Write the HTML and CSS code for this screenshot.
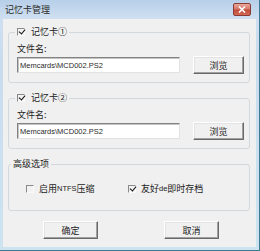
FILE: index.html
```html
<!DOCTYPE html>
<html lang="zh-CN">
<head>
<meta charset="utf-8">
<title>记忆卡管理</title>
<link rel="stylesheet" href="styles.css">
</head>
<body>
<div class="window">
  <div class="titlebar">
    <span class="title">记忆卡管理</span>
    <span class="close"><svg width="8" height="7" viewBox="0 0 8 7"><path d="M1 0.5 L7 6.5 M7 0.5 L1 6.5" stroke="#fff" stroke-width="1.6"/></svg></span>
  </div>
  <div class="content">
    <fieldset class="group">
      <legend class="legend-check"><span class="check on"></span>记忆卡①</legend>
      <div class="label">文件名:</div>
      <div class="filerow">
        <input class="path" type="text" value="Memcards\MCD002.PS2" readonly>
        <span class="btn browse">浏览</span>
      </div>
    </fieldset>
    <fieldset class="group">
      <legend class="legend-check"><span class="check on"></span>记忆卡②</legend>
      <div class="label">文件名:</div>
      <div class="filerow">
        <input class="path" type="text" value="Memcards\MCD002.PS2" readonly>
        <span class="btn browse">浏览</span>
      </div>
    </fieldset>
    <fieldset class="group adv">
      <legend class="legend-text">高级选项</legend>
      <div class="options">
        <label class="opt first"><span class="check"></span>启用<span class="lat">NTFS</span>压缩</label>
        <label class="opt"><span class="check on"></span>友好<span class="lat">de</span>即时存档</label>
      </div>
    </fieldset>
    <div class="actions">
      <span class="btn action">确定</span>
      <span class="btn action">取消</span>
    </div>
  </div>
</div>
</body>
</html>
```
FILE: styles.css
```css
html, body {
  margin: 0;
  padding: 0;
  background: #fff;
}
.window {
  width: 260px;
  height: 251px;
  box-sizing: border-box;
  display: flex;
  flex-direction: column;
  padding: 0 3px 3px 3px;
  border-right: 1px solid #3f7b8e;
  border-bottom: 1px solid #3f7b8e;
  background: linear-gradient(to bottom, #b7cfe9 0px, #cfdff1 18px, #c9dcef 60px, #cde3f0 100%);
  font-family: "Noto Sans CJK SC", "Liberation Sans", sans-serif;
  font-size: 9px;
  color: #1c1c1c;
}
.titlebar {
  height: 19px;
  flex: none;
  display: flex;
  justify-content: space-between;
  align-items: flex-start;
  margin: 0 -3px;
}
.title {
  margin-left: 5px;
  line-height: 19px;
  color: #2a2a2a;
}
.close {
  margin-top: 3px;
  margin-right: 8px;
  width: 18px;
  height: 13px;
  box-sizing: border-box;
  border: 1px solid #8b3b32;
  border-radius: 2px;
  background: linear-gradient(to bottom, #e8a99d 0%, #d7786a 45%, #c24c3b 55%, #cf6a55 100%);
  display: flex;
  align-items: center;
  justify-content: center;
}
.close svg { display: block; }
.content {
  flex: 1;
  background: #f0f0f0;
  padding: 6px 6px 0 5px;
  display: flex;
  flex-direction: column;
}
.group {
  margin: 0 0 8px 0;
  padding: 0 5px 8px 8px;
  border: 1px solid #d3d8dc;
  border-radius: 3px;
  min-width: 0;
}
.group legend {
  line-height: 14px;
  padding: 0 2px;
}
.legend-check {
  margin-left: -2px;
  display: flex;
  align-items: center;
}
.legend-text {
  margin-left: -6px;
}
.label {
  line-height: 12px;
  margin-top: 4px;
  padding-left: 0;
}
.filerow {
  margin-top: 1px;
  height: 18px;
  display: flex;
  align-items: center;
  gap: 13px;
}
.path {
  width: 163px;
  height: 16px;
  box-sizing: border-box;
  margin: 0;
  padding: 0 2px;
  border: 1px solid;
  border-color: #838383 #e2e2e2 #e2e2e2 #838383;
  box-shadow: inset 1px 1px 0 #c4c4c4;
  background: #fff;
  font-family: "Liberation Sans", Arial, sans-serif;
  font-size: 7.5px;
  color: #2b2b2b;
  outline: none;
}
.btn {
  box-sizing: border-box;
  height: 18px;
  display: flex;
  align-items: center;
  justify-content: center;
  background: #f0f0f0;
  border: 1px solid;
  border-color: #ffffff #696969 #696969 #ffffff;
  box-shadow: inset -1px -1px 0 #a0a0a0, inset 1px 1px 0 #e3e3e3;
  color: #1c1c1c;
}
.browse {
  width: 51px;
}
.check {
  display: inline-block;
  width: 8px;
  height: 8px;
  box-sizing: border-box;
  border-top: 1px solid #8a8a8a;
  border-left: 1px solid #8a8a8a;
  border-right: 1px solid #fbfbfb;
  border-bottom: 1px solid #fbfbfb;
  background: #f2f2f2;
  margin-right: 6px;
  position: relative;
  flex: none;
}
.check.on::after {
  content: "";
  position: absolute;
  left: 1px;
  top: 0px;
  width: 5px;
  height: 3px;
  border-left: 1.5px solid #111;
  border-bottom: 1.5px solid #111;
  transform: rotate(-50deg);
  transform-origin: center;
}
.adv {
  padding-bottom: 15px;
  margin-bottom: 10px;
}
.options {
  margin-top: 12px;
  display: flex;
  line-height: 12px;
}
.opt {
  display: flex;
  align-items: center;
}
.opt .check {
  margin-right: 5px;
}
.opt.first {
  margin-left: 9px;
  width: 102px;
}
.lat {
  font-family: "Liberation Sans", Arial, sans-serif;
  font-size: 7.5px;
}
.actions {
  display: flex;
  gap: 66px;
  padding-left: 35px;
}
.action {
  width: 55px;
}
```
